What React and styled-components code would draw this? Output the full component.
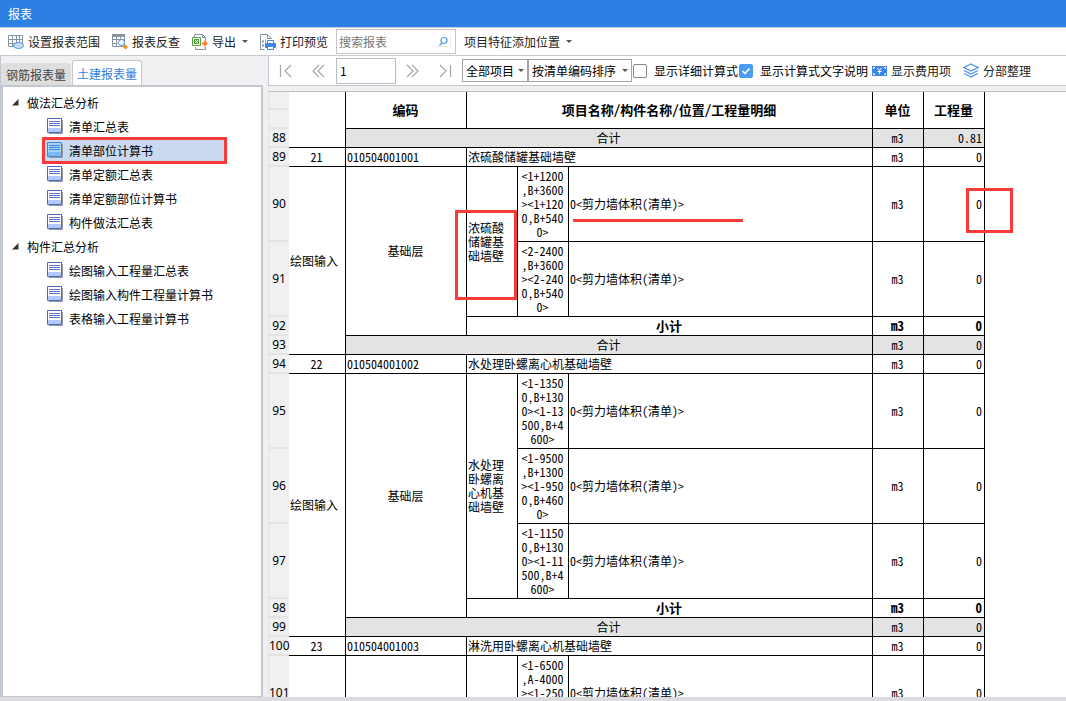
import styled, { createGlobalStyle } from "styled-components";
import { useState } from "react";

const GlobalStyle = createGlobalStyle`
  * {
    box-sizing: border-box;
  }
  body {
    margin: 0;
    background: #f0f0f2;
    font-family: "Noto Sans CJK SC", sans-serif;
    font-size: 12px;
    color: #000;
  }
  button, input, select {
    font: inherit;
    color: inherit;
  }
`;

const Page = styled.div`
  display: flex;
  flex-direction: column;
  height: 100vh;
  overflow: hidden;
`;

const TitleBar = styled.header`
  height: 27px;
  padding: 0 8px;
  line-height: 27px;
  background: #2d7fe3;
  color: white;
`;

const Toolbar = styled.div`
  display: flex;
  align-items: center;
  height: 29px;
  flex: none;
  gap: 4px;
  padding-left: 4px;
  background: white;
  border-top: 1px solid #c9ced4;
  border-bottom: 1px solid #c9cbd0;
`;

const ToolButton = styled.button`
  display: flex;
  align-items: center;
  flex: none;
  gap: 4px;
  height: 24px;
  padding: 0 4px;
  border: none;
  background: none;
  white-space: nowrap;
  color: #222;
  cursor: pointer;
`;

const Arrow = styled.span`
  margin-left: 2px;
  border: 3px solid transparent;
  border-top-color: #555;
  border-bottom: none;
`;

const SearchBox = styled.label`
  display: flex;
  align-items: center;
  width: 120px;
  height: 25px;
  padding: 0 4px 0 2px;
  border: 1px solid #c3c7cc;
`;

const SearchInput = styled.input`
  flex: 1;
  min-width: 0;
  padding: 0;
  border: none;
  outline: none;
  &::placeholder {
    color: #777;
  }
`;

const SearchButton = styled.span`
  display: flex;
  align-items: center;
  justify-content: center;
  width: 15px;
  height: 11px;
  border: 1px solid #ececec;
  border-width: 0 1px 1px 0;
`;

const Body = styled.div`
  display: flex;
  flex: 1;
  min-height: 0;
  gap: 5px;
  border-bottom: 4px solid #dcdce0;
`;

const Sidebar = styled.aside`
  display: flex;
  flex-direction: column;
  width: 263px;
  flex: none;
  border-left: 1px solid #c0c8d4;
`;

const Tabs = styled.div`
  display: flex;
  align-items: flex-end;
  height: 29px;
`;

const Tab = styled.button`
  height: ${(props) => (props.$active ? 25 : 22)}px;
  width: 70px;
  padding: 0;
  margin-right: 1px;
  border: ${(props) => (props.$active ? "1px solid #c3c7cc" : "none")};
  border-bottom: none;
  border-radius: 3px 3px 0 0;
  background: ${(props) => (props.$active ? "white" : "#dedede")};
  color: ${(props) => (props.$active ? "#2d7fe3" : "#444")};
  cursor: pointer;
`;

const Tree = styled.nav`
  flex: 1;
  padding-top: 3px;
  background: white;
  border: 2px solid #c3c9cf;
  border-bottom-width: 1px;
`;

const TreeGroup = styled.button`
  display: flex;
  align-items: center;
  gap: 8px;
  height: 24px;
  width: 100%;
  padding: 0 0 0 9px;
  border: none;
  background: none;
`;

const TreeItem = styled.button`
  position: relative;
  display: flex;
  align-items: center;
  gap: 6px;
  width: 179px;
  height: 24px;
  margin-left: 42px;
  padding: 0 0 0 2px;
  border: none;
  background: ${(props) => (props.$active ? "#c9d9f0" : "none")};
  white-space: nowrap;
`;

const Mark = styled.span`
  position: absolute;
  border: 3px solid #fc3a3a;
  pointer-events: none;
`;

const TreeMark = styled(Mark)`
  inset: -1px -3px -2px -3px;
`;

const NameMark = styled(Mark)`
  left: 187px;
  top: 118px;
  width: 62px;
  height: 90px;
`;

const AmountMark = styled(Mark)`
  left: 698px;
  top: 96px;
  width: 47px;
  height: 45px;
`;

const Underline = styled(Mark)`
  left: 305px;
  top: 127px;
  width: 170px;
  border-width: 0 0 3px;
`;

const Main = styled.main`
  display: flex;
  flex-direction: column;
  flex: 1;
  min-width: 0;
`;

const Pager = styled.div`
  display: flex;
  align-items: center;
  height: 30px;
  flex: none;
  margin-bottom: 5px;
  background: white;
  border: 1px solid #c3c7cc;
  border-top: none;
  border-right: none;
`;

const PagerButton = styled.button`
  display: flex;
  align-items: center;
  justify-content: center;
  width: 33px;
  height: 24px;
  padding: 0;
  border: none;
  background: none;
`;

const PageInput = styled.input`
  width: 60px;
  height: 26px;
  margin-left: 1px;
  padding: 0 3px;
  border: 1px solid #b9bdc4;
`;

const SelectBox = styled.span`
  display: flex;
  align-items: center;
  position: relative;
  width: ${(props) => props.$width}px;
  height: 23px;
  border: 1px solid #a5a5a5;
  ${Arrow} {
    position: absolute;
    right: 3px;
    pointer-events: none;
  }
`;

const Select = styled.select`
  appearance: none;
  width: 100%;
  height: 21px;
  padding: 0 0 0 3px;
  border: none;
  outline: none;
  background: none;
`;

const CheckLabel = styled.label`
  display: flex;
  align-items: center;
  gap: 7px;
  margin-left: 1px;
  white-space: nowrap;
`;

const Check = styled.input`
  appearance: none;
  width: 14px;
  height: 14px;
  margin: 0;
  border: 1px solid #888;
  border-radius: 2px;
  &:checked {
    border-color: #4a9bf5;
    background: #4a9bf5
      url("data:image/svg+xml,%3Csvg xmlns='http://www.w3.org/2000/svg' viewBox='0 0 12 12'%3E%3Cpath d='M2.5 6l2.5 2.5L9.5 3.5' fill='none' stroke='white' stroke-width='1.6'/%3E%3C/svg%3E");
  }
`;

const PagerTools = styled.div`
  display: flex;
  gap: 4px;
`;

const Sheet = styled.div`
  position: relative;
  flex: 1;
  overflow: hidden;
  background: white;
  border-top: 1px solid #c0c0c0;
`;

const Table = styled.table`
  width: 717px;
  table-layout: fixed;
  border-collapse: separate;
  border-spacing: 0;
  font-family: "Noto Sans Mono CJK SC", "Noto Sans CJK SC", monospace;
  line-height: 14px;
`;

const Row = styled.tr`
  height: ${(props) => props.$height || 19}px;
`;

const RowHead = styled.th`
  padding: 0;
  border: 1px solid #e4e4e4;
  border-width: 0 0 2px 1px;
  background: #f0f0f0;
  font-family: "Noto Sans", sans-serif;
  font-weight: 400;
  text-align: center;
  white-space: nowrap;
`;

const Cell = styled.td`
  padding: 0 2px 0 1px;
  border-right: 1px solid #000;
  border-bottom: 1px solid #000;
  background: ${(props) => (props.$shaded ? "#e3e3e3" : "white")};
  font-size: ${(props) => (props.$bold ? 13 : 12)}px;
  font-weight: ${(props) => (props.$bold ? 700 : 400)};
  text-align: ${(props) => props.$align || "center"};
  line-break: anywhere;
`;

const HeadCell = styled(Cell).attrs({ as: "th", $bold: true })``;

const tree = [
  {
    title: "做法汇总分析",
    items: ["清单汇总表", "清单部位计算书", "清单定额汇总表", "清单定额部位计算书", "构件做法汇总表"],
  },
  {
    title: "构件汇总分析",
    items: ["绘图输入工程量汇总表", "绘图输入构件工程量计算书", "表格输入工程量计算书"],
  },
];

const sections = [
  {
    start: 89,
    no: 21,
    code: "010504001001",
    name: "浓硫酸储罐基础墙壁",
    places: ["<1+1200,B+3600><1+1200,B+5400>", "<2-2400,B+3600><2-2400,B+5400>"],
  },
  {
    start: 94,
    no: 22,
    code: "010504001002",
    name: "水处理卧螺离心机基础墙壁",
    places: [
      "<1-13500,B+1300><1-13500,B+4600>",
      "<1-9500,B+1300><1-9500,B+4600>",
      "<1-11500,B+1300><1-11500,B+4600>",
    ],
  },
  {
    start: 100,
    no: 23,
    code: "010504001003",
    name: "淋洗用卧螺离心机基础墙壁",
    places: [
      "<1-6500,A-4000><1-2500,A-4000>",
      "<1-6500,A-2000><1-2500,A-2000>",
      "<1-6500,A-1000><1-2500,A-1000>",
    ],
  },
];

const GridIcon = () => (
  <svg width="16" height="16" fill="none" stroke="#8795a3">
    <path d="M.5 1.5h14v11H.5zM.5 5.5h14M.5 9.5h14M4.5 1v11M8.5 1v11M11.5 1v11" />
    <ellipse cx="10.500" cy="11.500" rx="5" ry="3" fill="#c4dcfa" stroke="#4a8fe0" />
  </svg>
);

const LookupIcon = () => (
  <svg width="16" height="16" fill="none" stroke="#8795a3">
    <path d="M.5 1.5h12v11H.5zM.5 5.5h12M.5 9.5h5M4.5 2v10M8.5 2v3" />
    <path d="M0 1.5h13" strokeWidth="3" />
    <circle cx="9.5" cy="8.5" r="3" fill="#fff" stroke="#4a8fe0" />
    <path d="M13.5 10.5l2.5 2.5-2.5 2.5L11 13z" fill="#f5921e" stroke="none" />
  </svg>
);

const ExportIcon = () => (
  <svg width="16" height="16" fill="none">
    <path d="M2.5 3V.5h8l3 3V7M3.500 13v2.500h10V13M10.500.5v3h3" stroke="#8795a3" />
    <path d="M.5 3.500h8v8h-8z" fill="#fff" stroke="#56a442" />
    <path d="M2 5h5v5H2z" fill="#56a442" />
    <path d="M3 6l3 3M6 6L3 9" stroke="#fff" />
    <path d="M10 8.500h2V6l4 3.500-4 3.500v-2.500h-2z" fill="#f47b20" />
  </svg>
);

const PrintIcon = () => (
  <svg width="16" height="16" fill="none">
    <path d="M11.500 5V4.500l-4-4h-7v15h4M7.500.5v4h4" stroke="#8795a3" />
    <path d="M2 7.500h2M5 7.500h1M2 11.500h2" stroke="#8795a3" strokeWidth="2" />
    <path d="M5 9h11v5H5z" fill="#3f87e5" />
    <path d="M7.500 6.500h6v3h-6zM7.500 12.500h6v3h-6z" fill="#fff" stroke="#3f87e5" />
  </svg>
);

const SearchIcon = () => (
  <svg width="11" height="11" fill="none" stroke="#4b9ce8" strokeWidth="1.2">
    <circle cx="6" cy="4.500" r="3" />
    <path d="M4 7L1.500 9.500" />
  </svg>
);

const ReportIcon = ({ active }) => (
  <svg width="16" height="16" fill="none">
    <path d="M2 15.500h13.500V2" stroke="#9a9a9a" />
    <path d="M.5.5h14v14H.5z" fill={active ? "#a5d2f7" : "#fff"} stroke={active ? "#3f87d8" : "#4969c4"} />
    <path d="M1 10h13v4H1z" fill={active ? "#7db8f5" : "#b6c9fb"} />
    <path d="M2 3.500h11M2 5.500h11M2 7.500h11" stroke={active ? "#3f87d8" : "#5873c9"} />
  </svg>
);

const ExpandIcon = () => (
  <svg width="7" height="7">
    <path d="M6.500 0v6.500H0z" fill="#333" />
  </svg>
);

const MoneyIcon = () => (
  <svg width="15" height="10" fill="none" stroke="#fff">
    <path d="M0 0h15v10H0z" fill="#3f87e5" stroke="none" />
    <path d="M5.500 2l2 2.500 2-2.500M7.500 4.500V8M5.500 5.500h4M1.500 3V1.500H3M12 1.500h1.500V3M1.500 7v1.500H3M12 8.500h1.500V7" />
  </svg>
);

const LayersIcon = () => (
  <svg width="16" height="15" fill="none" stroke="#4a92e0" strokeWidth="1.2">
    <path d="M8 1l7 3.500L8 8 1 4.500zM1 7.500L8 11l7-3.500M1 10.500L8 14l7-3.500" />
  </svg>
);

const pagerPaths = {
  first: "M1.500 1v12M12 1L6 7l6 6",
  prev: "M7 1L1 7l6 6M12 1L6 7l6 6",
  next: "M1 1l6 6-6 6M6 1l6 6-6 6",
  last: "M1 1l6 6-6 6M11.500 1v12",
};

const PagerNav = ({ kind, label }) => (
  <PagerButton aria-label={label}>
    <svg width="13" height="14" fill="none" stroke="#a6a6a6" strokeWidth="1.2">
      <path d={pagerPaths[kind]} />
    </svg>
  </PagerButton>
);

const SumRow = ({ no, amount }) => (
  <Row>
    <RowHead>{no}</RowHead>
    <Cell $shaded colSpan="4">合计</Cell>
    <Cell $shaded>m3</Cell>
    <Cell $shaded $align="right">{amount}</Cell>
  </Row>
);

const Section = ({ start, no, code, name, places }) => {
  const count = places.length;
  return (
    <>
      <Row>
        <RowHead>{start}</RowHead>
        <Cell>{no}</Cell>
        <Cell $align="left">{code}</Cell>
        <Cell $align="left" colSpan="3">{name}</Cell>
        <Cell>m3</Cell>
        <Cell $align="right">0</Cell>
      </Row>
      {places.map((place, i) => (
        <Row key={place} $height={75}>
          <RowHead>{start + 1 + i}</RowHead>
          {i === 0 && (
            <>
              <Cell $align="left" rowSpan={count + 2}>绘图输入</Cell>
              <Cell rowSpan={count + 1}>基础层</Cell>
              <Cell $align="left" rowSpan={count}>{name}</Cell>
            </>
          )}
          <Cell>{place}</Cell>
          <Cell $align="left">0&lt;剪力墙体积(清单)&gt;</Cell>
          <Cell>m3</Cell>
          <Cell $align="right">0</Cell>
        </Row>
      ))}
      <Row>
        <RowHead>{start + count + 1}</RowHead>
        <Cell $bold colSpan="3">小计</Cell>
        <Cell $bold>m3</Cell>
        <Cell $bold $align="right">0</Cell>
      </Row>
      <SumRow no={start + count + 2} amount="0" />
    </>
  );
};

const App = () => {
  const [tab, setTab] = useState("土建报表量");
  const [selected, setSelected] = useState("清单部位计算书");
  const [search, setSearch] = useState("");
  const [page, setPage] = useState("1");

  return (
    <Page>
      <GlobalStyle />
      <TitleBar>报表</TitleBar>
      <Toolbar>
        <ToolButton><GridIcon />设置报表范围</ToolButton>
        <ToolButton><LookupIcon />报表反查</ToolButton>
        <ToolButton><ExportIcon />导出<Arrow /></ToolButton>
        <ToolButton><PrintIcon />打印预览</ToolButton>
        <SearchBox>
          <SearchInput
            aria-label="搜索报表"
            placeholder="搜索报表"
            value={search}
            onChange={(e) => setSearch(e.target.value)}
          />
          <SearchButton><SearchIcon /></SearchButton>
        </SearchBox>
        <ToolButton>项目特征添加位置<Arrow /></ToolButton>
      </Toolbar>
      <Body>
        <Sidebar>
          <Tabs>
            {["钢筋报表量", "土建报表量"].map((name) => (
              <Tab key={name} $active={name === tab} onClick={() => setTab(name)}>
                {name}
              </Tab>
            ))}
          </Tabs>
          <Tree>
            {tree.map((group) => (
              <div key={group.title}>
                <TreeGroup><ExpandIcon />{group.title}</TreeGroup>
                {group.items.map((item) => (
                  <TreeItem key={item} $active={item === selected} onClick={() => setSelected(item)}>
                    <ReportIcon active={item === selected} />
                    {item}
                    {item === selected && <TreeMark />}
                  </TreeItem>
                ))}
              </div>
            ))}
          </Tree>
        </Sidebar>
        <Main>
          <Pager>
            <PagerNav kind="first" label="首页" />
            <PagerNav kind="prev" label="上一页" />
            <PageInput aria-label="页码" value={page} onChange={(e) => setPage(e.target.value)} />
            <PagerNav kind="next" label="下一页" />
            <PagerNav kind="last" label="末页" />
            <SelectBox $width={66}>
              <Select aria-label="项目"><option>全部项目</option></Select>
              <Arrow />
            </SelectBox>
            <SelectBox $width={104}>
              <Select aria-label="排序"><option>按清单编码排序</option></Select>
              <Arrow />
            </SelectBox>
            <CheckLabel><Check type="checkbox" />显示详细计算式</CheckLabel>
            <CheckLabel><Check type="checkbox" defaultChecked />显示计算式文字说明</CheckLabel>
            <PagerTools>
              <ToolButton><MoneyIcon />显示费用项</ToolButton>
              <ToolButton><LayersIcon />分部整理</ToolButton>
            </PagerTools>
          </Pager>
          <Sheet>
            <Table>
              <colgroup>
                {[21, 57, 121, 51, 51, 304, 51, 61].map((width, i) => (
                  <col key={i} width={width} />
                ))}
              </colgroup>
              <thead>
                <Row $height={18}>
                  <RowHead />
                  <Cell rowSpan="3" />
                  <HeadCell rowSpan="2">编码</HeadCell>
                  <HeadCell rowSpan="2" colSpan="3">项目名称/构件名称/位置/工程量明细</HeadCell>
                  <HeadCell rowSpan="2">单位</HeadCell>
                  <HeadCell rowSpan="2">工程量</HeadCell>
                </Row>
                <Row><RowHead /></Row>
                <SumRow no={88} amount="0.81" />
              </thead>
              <tbody>
                {sections.map((section) => (
                  <Section key={section.code} {...section} />
                ))}
              </tbody>
            </Table>
            <NameMark />
            <Underline />
            <AmountMark />
          </Sheet>
        </Main>
      </Body>
    </Page>
  );
};

export default App;
